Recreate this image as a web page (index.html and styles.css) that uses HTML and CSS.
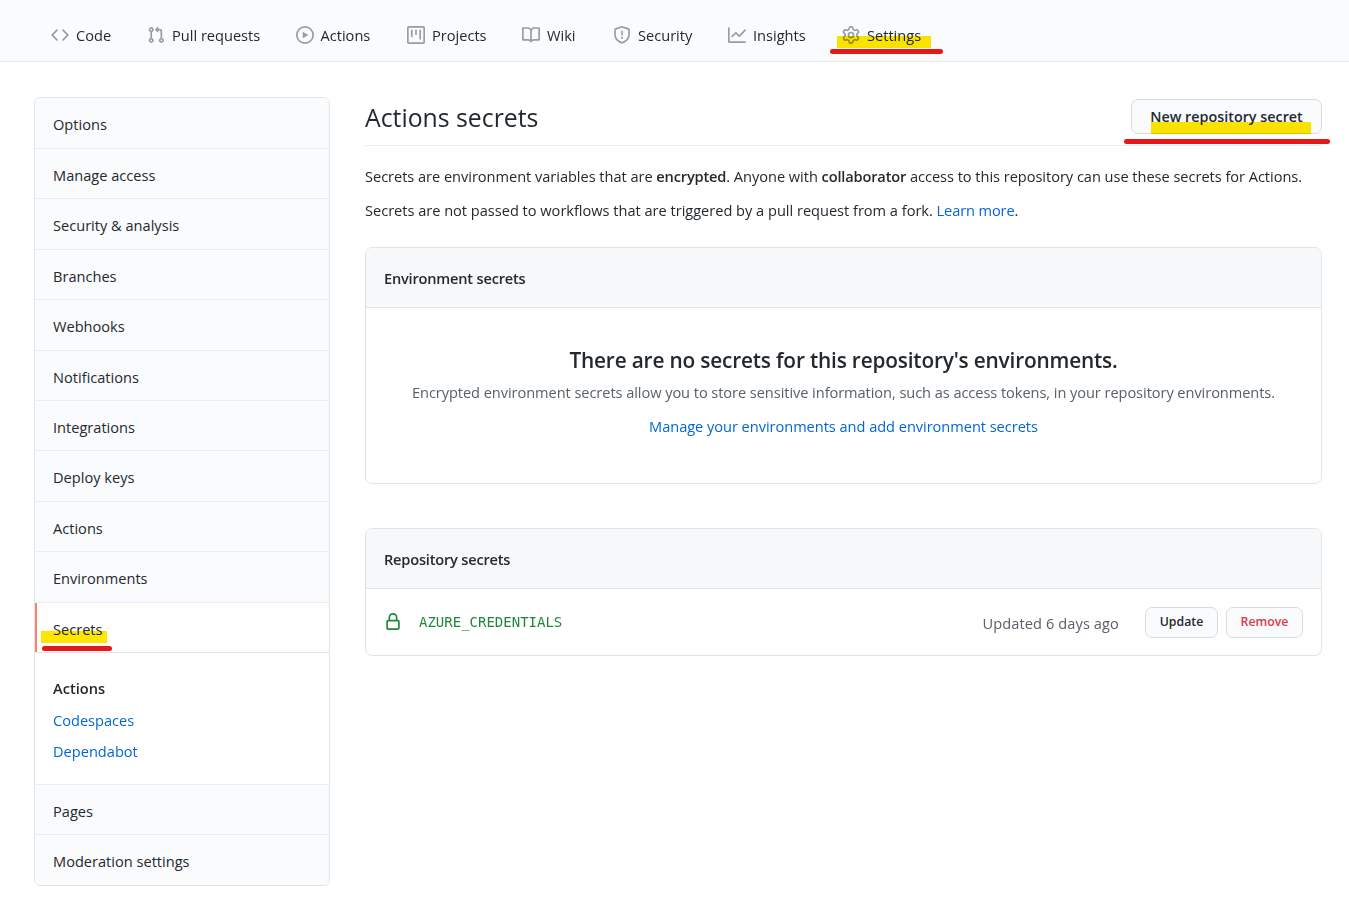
FILE: index.html
```html
<!DOCTYPE html>
<html lang="en">
<head>
<meta charset="utf-8">
<title>Actions secrets</title>
<link rel="stylesheet" href="styles.css">
</head>
<body>
<nav class="topnav">
  <a class="tab"><svg class="icon" viewBox="0 0 16 16"><path d="M4.72 3.22a.75.75 0 011.06 1.06L2.06 8l3.72 3.72a.75.75 0 11-1.06 1.06L.47 8.53a.75.75 0 010-1.06l4.25-4.25zm6.56 0a.75.75 0 10-1.06 1.06L13.94 8l-3.72 3.72a.75.75 0 101.06 1.06l4.25-4.25a.75.75 0 000-1.06l-4.25-4.25z"/></svg><span>Code</span></a>
  <a class="tab"><svg class="icon" viewBox="0 0 16 16"><path d="M7.177 3.073L9.573.677A.25.25 0 0110 .854v4.792a.25.25 0 01-.427.177L7.177 3.427a.25.25 0 010-.354zM3.75 2.5a.75.75 0 100 1.5.75.75 0 000-1.5zm-2.25.75a2.25 2.25 0 113 2.122v5.256a2.251 2.251 0 11-1.5 0V5.372A2.25 2.25 0 011.5 3.25zM11 2.5h-1V4h1a1 1 0 011 1v5.628a2.251 2.251 0 101.5 0V5A2.5 2.5 0 0011 2.5zm1 10.25a.75.75 0 111.5 0 .75.75 0 01-1.5 0zM3.75 12a.75.75 0 100 1.5.75.75 0 000-1.5z"/></svg><span>Pull requests</span></a>
  <a class="tab"><svg class="icon" viewBox="0 0 16 16"><path d="M1.5 8a6.5 6.5 0 1113 0 6.5 6.5 0 01-13 0zM8 0a8 8 0 100 16A8 8 0 008 0zM6.379 5.227A.25.25 0 006 5.442v5.117a.25.25 0 00.379.214l4.264-2.559a.25.25 0 000-.428L6.379 5.227z"/></svg><span>Actions</span></a>
  <a class="tab"><svg class="icon" viewBox="0 0 16 16"><path d="M1.75 0A1.75 1.75 0 000 1.75v12.5C0 15.216.784 16 1.75 16h12.5A1.75 1.75 0 0016 14.25V1.75A1.75 1.75 0 0014.25 0H1.75zM1.5 1.75a.25.25 0 01.25-.25h12.5a.25.25 0 01.25.25v12.5a.25.25 0 01-.25.25H1.75a.25.25 0 01-.25-.25V1.75zM11.75 3a.75.75 0 00-.75.75v7.5a.75.75 0 001.5 0v-7.5a.75.75 0 00-.75-.75zm-8.25.75a.75.75 0 011.5 0v5.5a.75.75 0 01-1.5 0v-5.5zM8 3a.75.75 0 00-.75.75v3.5a.75.75 0 001.5 0v-3.5A.75.75 0 008 3z"/></svg><span>Projects</span></a>
  <a class="tab"><svg class="icon" viewBox="0 0 16 16"><path d="M0 1.75A.75.75 0 01.75 1h4.253c1.227 0 2.317.59 3 1.501A3.744 3.744 0 0111.006 1h4.245a.75.75 0 01.75.75v10.5a.75.75 0 01-.75.75h-4.507a2.25 2.25 0 00-1.591.659l-.622.621a.75.75 0 01-1.06 0l-.622-.621A2.25 2.25 0 005.258 13H.75a.75.75 0 01-.75-.75V1.75zm8.755 3a2.25 2.25 0 012.25-2.25H14.5v9h-3.757c-.71 0-1.4.201-1.992.572l.004-7.322zm-1.504 7.324l.004-5.073-.002-2.253A2.25 2.25 0 005.003 2.5H1.5v9h3.757a3.75 3.75 0 011.994.574z"/></svg><span>Wiki</span></a>
  <a class="tab"><svg class="icon" viewBox="0 0 16 16"><path d="M7.467.133a1.75 1.75 0 011.066 0l5.25 1.68A1.75 1.75 0 0115 3.48V7c0 1.566-.32 3.182-1.303 4.682-.983 1.498-2.585 2.813-5.032 3.855a1.7 1.7 0 01-1.33 0c-2.447-1.042-4.049-2.357-5.032-3.855C1.32 10.182 1 8.566 1 7V3.48a1.75 1.75 0 011.217-1.667l5.25-1.68zm.61 1.429a.25.25 0 00-.153 0l-5.25 1.68a.25.25 0 00-.174.238V7c0 1.358.275 2.666 1.057 3.86.784 1.194 2.121 2.34 4.366 3.297a.2.2 0 00.154 0c2.245-.956 3.582-2.104 4.366-3.298C13.225 9.666 13.5 8.36 13.5 7V3.48a.25.25 0 00-.174-.237l-5.25-1.68zM9 10.5a1 1 0 11-2 0 1 1 0 012 0zm-.25-5.75a.75.75 0 10-1.5 0v3a.75.75 0 001.5 0v-3z"/></svg><span>Security</span></a>
  <a class="tab"><svg class="icon" viewBox="0 0 16 16"><path d="M1.5 1.75a.75.75 0 00-1.5 0v12.5c0 .414.336.75.75.75h14.5a.75.75 0 000-1.5H1.5V1.75zm14.28 2.53a.75.75 0 00-1.06-1.06L10 7.94 7.53 5.47a.75.75 0 00-1.06 0L3.22 8.72a.75.75 0 001.06 1.06L7 7.06l2.47 2.47a.75.75 0 001.06 0l5.25-5.25z"/></svg><span>Insights</span></a>
  <a class="tab"><svg class="icon" viewBox="0 0 16 16"><path d="M7.429 1.525a6.593 6.593 0 011.142 0c.036.003.108.036.137.146l.289 1.105c.147.56.55.967.997 1.189.174.086.341.183.501.29.417.278.97.423 1.53.27l1.102-.303c.11-.03.175.016.195.046.219.31.41.641.573.989.014.031.022.11-.059.19l-.815.806c-.411.406-.562.957-.53 1.456a4.588 4.588 0 010 .582c-.032.499.119 1.05.53 1.456l.815.806c.08.08.073.159.059.19a6.494 6.494 0 01-.573.99c-.02.029-.086.074-.195.045l-1.103-.303c-.559-.153-1.112-.008-1.529.27-.16.107-.327.204-.5.29-.449.222-.851.628-.998 1.189l-.289 1.105c-.029.11-.101.143-.137.146a6.613 6.613 0 01-1.142 0c-.036-.003-.108-.037-.137-.146l-.289-1.105c-.147-.56-.55-.967-.997-1.189a4.502 4.502 0 01-.501-.29c-.417-.278-.97-.423-1.53-.27l-1.102.303c-.11.03-.175-.016-.195-.046a6.492 6.492 0 01-.573-.989c-.014-.031-.022-.11.059-.19l.815-.806c.411-.406.562-.957.53-1.456a4.587 4.587 0 010-.582c.032-.499-.119-1.05-.53-1.456l-.815-.806c-.08-.08-.073-.159-.059-.19a6.44 6.44 0 01.573-.99c.02-.029.086-.075.195-.045l1.103.303c.559.153 1.112.008 1.529-.27.16-.107.327-.204.5-.29.449-.222.851-.628.998-1.189l.289-1.105c.029-.11.101-.143.137-.146zM8 0c-.236 0-.47.01-.701.03-.743.065-1.29.615-1.458 1.261l-.29 1.106c-.017.066-.078.158-.211.224a5.994 5.994 0 00-.668.386c-.123.082-.233.09-.3.071L3.27 2.776c-.644-.177-1.392.02-1.82.63a7.977 7.977 0 00-.704 1.217c-.315.675-.111 1.422.363 1.891l.815.806c.05.048.098.147.088.294a6.084 6.084 0 000 .772c.01.147-.038.246-.088.294l-.815.806c-.474.469-.678 1.216-.363 1.891.2.428.436.835.704 1.218.428.609 1.176.806 1.82.63l1.103-.303c.066-.019.176-.011.299.071.213.143.436.272.668.386.133.066.194.158.212.224l.289 1.106c.169.646.715 1.196 1.458 1.26a8.094 8.094 0 001.402 0c.743-.064 1.29-.614 1.458-1.26l.29-1.106c.017-.066.078-.158.211-.224a5.98 5.98 0 00.668-.386c.123-.082.233-.09.3-.071l1.102.302c.644.177 1.392-.02 1.82-.63.268-.382.505-.789.704-1.217.315-.675.111-1.422-.364-1.891l-.814-.806c-.05-.048-.098-.147-.088-.294a6.1 6.1 0 000-.772c-.01-.147.039-.246.088-.294l.814-.806c.475-.469.679-1.216.364-1.891a7.992 7.992 0 00-.704-1.218c-.428-.609-1.176-.806-1.82-.63l-1.103.303c-.066.019-.176.011-.299-.071a5.991 5.991 0 00-.668-.386c-.133-.066-.194-.158-.212-.224L10.16 1.29C9.99.645 9.444.095 8.701.031A8.094 8.094 0 008 0zm1.5 8a1.5 1.5 0 11-3 0 1.5 1.5 0 013 0zM11 8a3 3 0 11-6 0 3 3 0 016 0z"/></svg><span>Settings</span><i class="marker marker-settings"></i><i class="stroke stroke-settings"></i></a>
</nav>
<div class="layout">
  <aside class="menu">
    <a class="menu-item">Options</a>
    <a class="menu-item">Manage access</a>
    <a class="menu-item">Security &amp; analysis</a>
    <a class="menu-item">Branches</a>
    <a class="menu-item">Webhooks</a>
    <a class="menu-item">Notifications</a>
    <a class="menu-item">Integrations</a>
    <a class="menu-item">Deploy keys</a>
    <a class="menu-item">Actions</a>
    <a class="menu-item">Environments</a>
    <a class="menu-item current">Secrets<i class="marker marker-secrets"></i><i class="stroke stroke-secrets"></i></a>
    <div class="submenu">
      <b>Actions</b>
      <a>Codespaces</a>
      <a>Dependabot</a>
    </div>
    <a class="menu-item">Pages</a>
    <a class="menu-item">Moderation settings</a>
  </aside>
  <main class="content">
    <header class="subhead">
      <h2>Actions secrets</h2>
      <button class="btn btn-new">New repository secret<i class="marker marker-new"></i><i class="stroke stroke-new"></i></button>
    </header>
    <p class="note">Secrets are environment variables that are <b>encrypted</b>. Anyone with <b>collaborator</b> access to this repository can use these secrets for Actions.</p>
    <p class="note note-fork">Secrets are not passed to workflows that are triggered by a pull request from a fork. <a>Learn more</a>.</p>
    <section class="box box-env">
      <h3>Environment secrets</h3>
      <div class="blank">
        <h4>There are no secrets for this repository's environments.</h4>
        <p class="blank-text">Encrypted environment secrets allow you to store sensitive information, such as access tokens, in your repository environments.</p>
        <a class="blank-link">Manage your environments and add environment secrets</a>
      </div>
    </section>
    <section class="box">
      <h3>Repository secrets</h3>
      <div class="secret">
        <svg class="icon lock" viewBox="0 0 16 16"><path fill-rule="evenodd" d="M4 4v2h-.25A1.75 1.75 0 002 7.75v5.5c0 .966.784 1.75 1.75 1.75h8.5A1.75 1.75 0 0014 13.25v-5.5A1.75 1.75 0 0012.25 6H12V4a4 4 0 10-8 0zm6.5 2V4a2.5 2.5 0 00-5 0v2h5zM12 7.5h.25a.25.25 0 01.25.25v5.5a.25.25 0 01-.25.25h-8.5a.25.25 0 01-.25-.25v-5.5a.25.25 0 01.25-.25H12z"/></svg>
        <code>AZURE_CREDENTIALS</code>
        <span class="updated">Updated 6 days ago</span>
        <button class="btn btn-sm btn-update">Update</button>
        <button class="btn btn-sm btn-remove">Remove</button>
      </div>
    </section>
  </main>
</div>
</body>
</html>
```
FILE: styles.css
```css
* { box-sizing: border-box; }
body {
  margin: 0;
  height: 907px;
  overflow: hidden;
  background: #fff;
  color: #24292e;
  font: 14.6px/24px "Open Sans", "Noto Sans", sans-serif;
  white-space: nowrap;
}
h2, h3, h4, p { margin: 0; }
b, h3, h4 { font-weight: 600; }
a { color: #0366d6; }

.topnav {
  display: grid;
  grid-template-columns: 96px 148.5px 111.5px 115px 91px 115px 114px auto;
  height: 62px;
  padding: 0 0 0 51px;
  background: #fafbfc;
  border-bottom: 1px solid #e6e9ec;
}
.tab {
  position: relative;
  display: flex;
  gap: 7px;
  padding-top: 23px;
  color: #24292e;
}
.icon { width: 18px; height: 18px; flex: none; fill: #959da5; fill-rule: evenodd; }
.tab .icon { margin-top: 2.5px; }

.marker {
  position: absolute;
  background: #ffe600;
  mix-blend-mode: multiply;
}
.stroke {
  position: absolute;
  height: 5px;
  border-radius: 3px;
  background: #e61919;
}
.marker-settings { left: -5px; top: 36px; width: 94px; height: 12px; }
.stroke-settings { left: -12px; top: 49px; width: 113px; }
.marker-secrets { left: 6px; top: 28.5px; width: 66px; height: 12px; }
.stroke-secrets { left: 7px; top: 43.5px; width: 70px; }
.marker-new { left: 19px; top: 22px; width: 160px; height: 12px; }
.stroke-new { left: -8px; top: 39px; width: 206px; }

.layout { display: flex; gap: 35px; padding: 35px 27px 0 34px; }

.menu {
  width: 296px;
  height: 789px;
  border: 1px solid #e1e4e8;
  border-radius: 6px;
  overflow: hidden;
}
.menu-item {
  position: relative;
  display: block;
  height: 50.42px;
  padding: 14px 18px 0;
  color: #24292e;
  background: #fafbfc;
  border-bottom: 1px solid #eaecef;
}
.menu-item:first-child { height: 51px; }
.menu-item:last-child { border-bottom: 0; }
.current {
  background: #fff;
  border-bottom-color: #e1e4e8;
  box-shadow: inset 2px 0 #f9826c;
}
.submenu {
  display: flex;
  flex-direction: column;
  gap: 7.5px;
  height: 132px;
  padding: 23px 18px 0;
  border-bottom: 1px solid #eaecef;
}

.content { width: 957px; }
.subhead {
  display: flex;
  justify-content: space-between;
  height: 49px;
  padding-top: 2px;
  border-bottom: 1px solid #eaecef;
}
h2 { margin-top: -1px; font-size: 24.8px; line-height: 38px; font-weight: 400; }
.btn {
  position: relative;
  height: 35px;
  padding: 0;
  border: 1px solid #d9dbde;
  border-radius: 7px;
  background: #fafbfc;
  color: #24292e;
  font: 600 14.35px/20px "Open Sans", "Noto Sans", sans-serif;
}
.btn-new { width: 191px; padding-top: 1px; }
.note { margin-top: 18px; letter-spacing: -0.035px; }
.note b { letter-spacing: -0.16px; }
.note-fork { margin-top: 10px; letter-spacing: -0.015px; }
.note a { letter-spacing: -0.12px; }

.box { border: 1px solid #e1e4e8; border-radius: 7px; overflow: hidden; }
.box-env { margin: 25px 0 44px; height: 237px; }
.box h3 {
  height: 60px;
  padding: 18px 18px 0;
  background: #f6f8fa;
  border-bottom: 1px solid #e1e4e8;
  font-size: 14.6px;
  line-height: 24px;
  letter-spacing: -0.2px;
}
.blank { text-align: center; padding-top: 35px; }
.blank h4 { font-size: 20.8px; line-height: 34px; letter-spacing: -0.17px; }
.blank-text { margin-top: 3px; color: #586069; letter-spacing: -0.062px; }
.blank-link { display: block; margin-top: 10px; letter-spacing: -0.04px; }
.secret { display: flex; align-items: center; height: 66px; padding: 0 18px; }
.lock { fill: #22863a; }
code { margin-left: 17px; color: #22863a; font: 14px/20px "DejaVu Sans Mono", monospace; }
.updated { margin: 1px 26px 0 auto; color: #586069; letter-spacing: 0.1px; }
.btn-sm { height: 31px; font-size: 12.3px; }
.btn-update { width: 73px; margin-right: 8px; }
.btn-remove { width: 77px; color: #d73a49; }
```
